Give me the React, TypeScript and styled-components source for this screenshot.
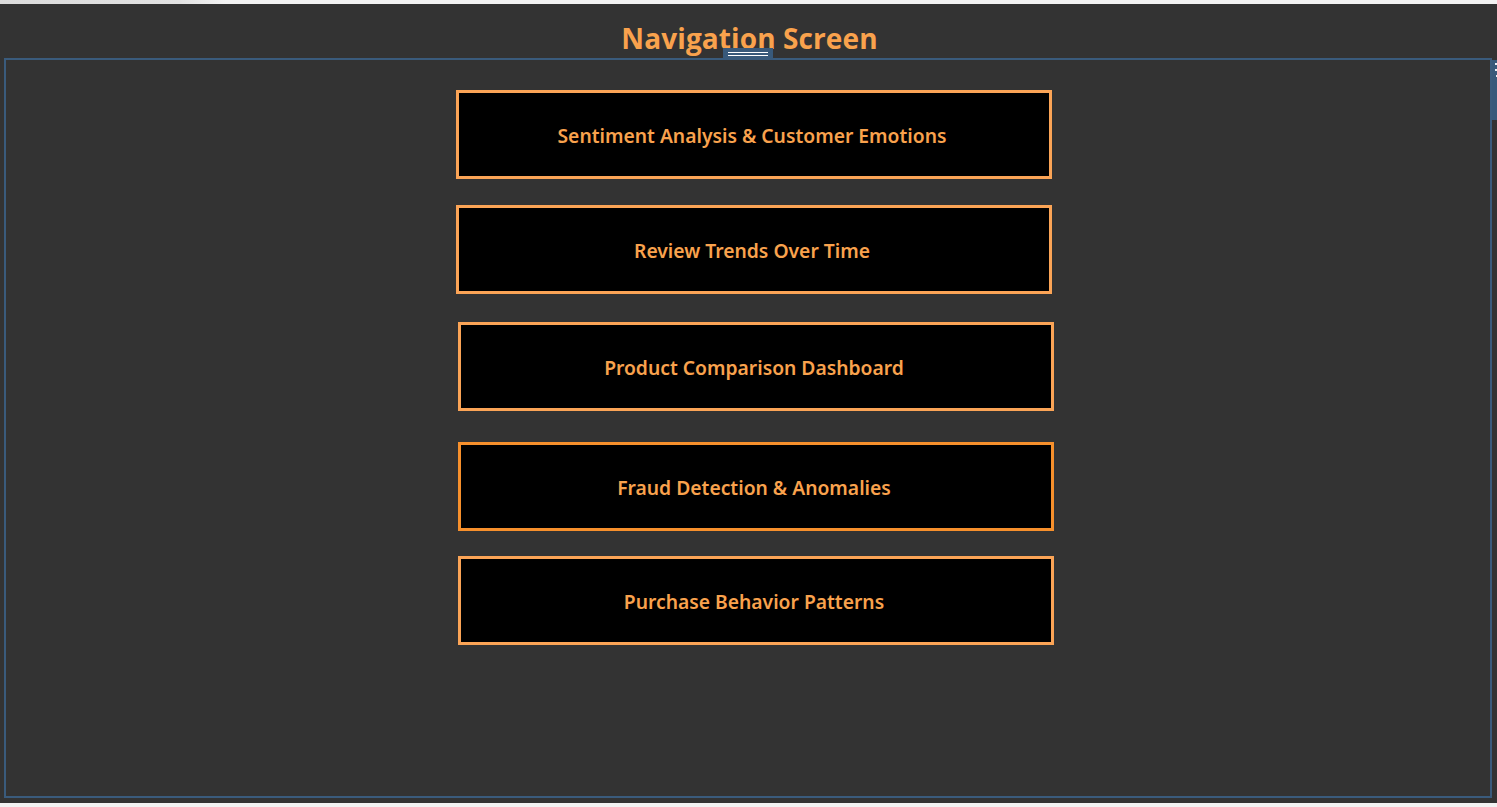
import React from "react";
import styled, { createGlobalStyle } from "styled-components";

const Global = createGlobalStyle`
  html, body { margin: 0; padding: 0; background: #f3f3f3; }
  body { font-family: "Noto Sans", "Open Sans", sans-serif; }
  #root { width: 1497px; height: 807px; overflow: hidden; }
`;

const Page = styled.div`
  width: 1497px;
  height: 807px;
  display: flex;
  flex-direction: column;
  background: #f3f3f3;
  position: relative;
`;

const TopStrip = styled.div`
  height: 4px;
  flex: none;
  background: linear-gradient(90deg, #dcdcdc 0px, #e2e2e2 180px, #f3f3f3 225px, #f3f3f3 100%);
`;

const Canvas = styled.div`
  height: 799px;
  flex: none;
  background: #333333;
  display: flex;
  flex-direction: column;
  position: relative;
`;

const Header = styled.div`
  height: 54px;
  flex: none;
  display: flex;
  justify-content: center;
  align-items: flex-start;
  padding-left: 2px;
  box-sizing: border-box;
`;

const Title = styled.h1`
  margin: 0;
  margin-top: 15px;
  font-family: "Open Sans", "Noto Sans", sans-serif;
  font-weight: 700;
  font-size: 28px;
  line-height: 38px;
  color: #f9a24d;
  letter-spacing: 0.1px;
`;

const Frame = styled.div`
  margin-left: 4px;
  width: 1488px;
  height: 740px;
  box-sizing: border-box;
  border: 2px solid #3a5b7c;
  display: flex;
  flex-direction: column;
  padding-left: 450px;
  padding-top: 30px;
  position: relative;
`;

const Handle = styled.div`
  position: absolute;
  top: -12px;
  left: 717px;
  width: 50px;
  height: 12px;
  background: #38597a;
  display: flex;
  flex-direction: column;
  justify-content: center;
  align-items: center;
  gap: 2px;
  &::before, &::after {
    content: "";
    width: 40px;
    height: 1px;
    background: #ffffff;
  }
`;

const SideTab = styled.div`
  position: absolute;
  right: -8px;
  top: 0px;
  width: 6px;
  height: 60px;
  background: #38597a;
  display: flex;
  flex-direction: column;
  gap: 4px;
  padding-top: 3px;
  box-sizing: border-box;
  align-items: flex-end;
`;

const Tick = styled.span<{ $w: number }>`
  display: block;
  width: ${(p) => p.$w}px;
  height: 2px;
  background: #e8eef5;
`;

const NavButton = styled.div<{ $shift: number; $gap: number; $accent: string }>`
  width: 596px;
  height: 89px;
  box-sizing: border-box;
  margin-left: ${(p) => p.$shift}px;
  margin-top: ${(p) => p.$gap}px;
  background: #000000;
  border: 3px solid ${(p) => p.$accent};
  display: flex;
  align-items: center;
  justify-content: center;
  font-family: "Noto Sans", sans-serif;
  font-weight: 600;
  font-size: 19.3px;
  color: #f9a24d;
  cursor: pointer;
  padding-top: 1px;
  padding-right: 4px;
`;

const items = [
  { label: "Sentiment Analysis & Customer Emotions", shift: 0, gap: 0, accent: "#fba456" },
  { label: "Review Trends Over Time", shift: 0, gap: 26, accent: "#fba456" },
  { label: "Product Comparison Dashboard", shift: 2, gap: 28, accent: "#fba456" },
  { label: "Fraud Detection & Anomalies", shift: 2, gap: 31, accent: "#f7902c" },
  { label: "Purchase Behavior Patterns", shift: 2, gap: 25, accent: "#fba456" },
];

export default function App() {
  return (
    <Page>
      <Global />
      <TopStrip />
      <Canvas>
        <Header>
          <Title>Navigation Screen</Title>
        </Header>
        <Frame>
          <Handle />
          <SideTab>
            <Tick $w={3} />
            <Tick $w={3} />
            <Tick $w={2} />
          </SideTab>
          {items.map((it) => (
            <NavButton key={it.label} $shift={it.shift} $gap={it.gap} $accent={it.accent}>
              {it.label}
            </NavButton>
          ))}
        </Frame>
      </Canvas>
    </Page>
  );
}
